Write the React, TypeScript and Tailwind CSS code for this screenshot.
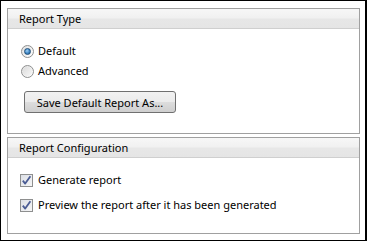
import React from "react";

function Radio({ checked }: { checked: boolean }) {
  return (
    <span className="relative flex h-[13px] w-[13px] shrink-0 items-center justify-center rounded-full border border-[#8e8f8f] bg-[linear-gradient(135deg,#e0e0e0,#ffffff)]">
      {checked ? (
        <span className="h-[7px] w-[7px] rounded-full border border-[#1f4f7a] bg-[radial-gradient(circle_at_40%_35%,#9fd0f5_0%,#3f86c4_55%,#1d5a8f_100%)]" />
      ) : (
        <span className="h-[9px] w-[9px] rounded-full bg-[linear-gradient(135deg,#dcdcdc,#f7f7f7)]" />
      )}
    </span>
  );
}

function Check() {
  return (
    <span className="flex h-[13px] w-[13px] shrink-0 items-center justify-center border border-[#8e8f8f] bg-[linear-gradient(135deg,#dcdfe6,#f6f6f6)]">
      <svg width="11" height="11" viewBox="0 0 11 11">
        <path d="M1.8 5.6 L4.2 8.6 L9.4 1.2" fill="none" stroke="#4a5c94" strokeWidth="1.8" strokeLinejoin="round" />
      </svg>
    </span>
  );
}

function Panel({ title, children, h }: { title: string; children: React.ReactNode; h: string }) {
  return (
    <div className={`flex flex-col border border-[#a0a0a0] bg-white ${h}`}>
      <div className="flex h-[20px] items-center border-b border-[#cfcfcf] bg-[linear-gradient(#f7f7f7_0%,#f1f1f1_45%,#e7e7e7_55%,#e5e5e5_100%)] pl-[11px] text-[11px] leading-none">
        {title}
      </div>
      {children}
    </div>
  );
}

export default function App() {
  return (
    <div
      className="flex h-[241px] w-[367px] flex-col gap-[3px] border-b border-l border-r-2 border-t border-black bg-white pb-[6px] pl-[6px] pr-[5px] pt-[7px] text-[11px] text-black"
      style={{ fontFamily: '"Noto Sans", "Open Sans", sans-serif' }}
    >
      <Panel title="Report Type" h="h-[126px]">
        <div className="flex flex-col pl-[13px] pt-[12px]">
          <label className="flex h-[20px] items-center gap-[4px]">
            <Radio checked />
            <span>Default</span>
          </label>
          <label className="flex h-[20px] items-center gap-[4px]">
            <Radio checked={false} />
            <span>Advanced</span>
          </label>
          <div className="pl-[3px] pt-[10px]">
            <button className="flex h-[22px] w-[152px] items-center justify-center rounded-[3px] border border-[#707070] bg-[linear-gradient(#f2f2f2_0%,#ebebeb_50%,#dddddd_50%,#cfcfcf_100%)] text-[11px] leading-none">
              Save Default Report As...
            </button>
          </div>
        </div>
      </Panel>
      <Panel title="Report Configuration" h="h-[97px]">
        <div className="flex flex-col gap-[12px] pl-[12px] pt-[16px]">
          <label className="flex h-[13px] items-center gap-[5px]">
            <Check />
            <span>Generate report</span>
          </label>
          <label className="flex h-[13px] items-center gap-[5px]">
            <Check />
            <span>Preview the report after it has been generated</span>
          </label>
        </div>
      </Panel>
    </div>
  );
}
